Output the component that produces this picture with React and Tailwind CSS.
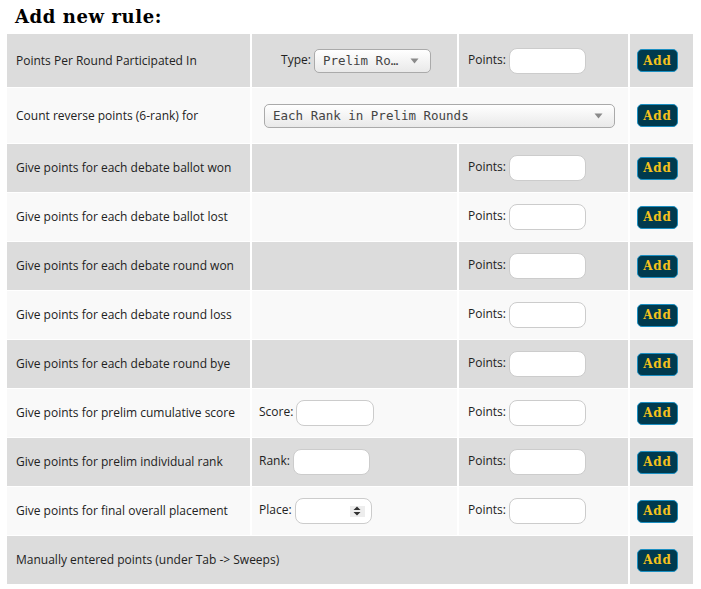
import React from 'react'

const body = { fontFamily: '"Open Sans", "Liberation Sans", sans-serif' }
const mono = { fontFamily: '"DejaVu Sans Mono", "Liberation Mono", monospace' }
const slab = { fontFamily: '"DejaVu Serif", "Liberation Serif", serif' }

function AddButton() {
  return (
    <button
      className="w-[41px] h-[23px] rounded-[5px] border border-[#1b8fc2] bg-[#003a4e] text-[#f6c21c] text-[12px] font-bold leading-none tracking-[0.8px]"
      style={slab}
    >
      Add
    </button>
  )
}

function TextBox({ w = 'w-[77px]' }) {
  return <input className={`${w} h-[26px] rounded-lg border border-[#cccccc] bg-white outline-none`} />
}

function Caret() {
  return (
    <svg width="9" height="6" viewBox="0 0 9 6" className="shrink-0">
      <path d="M0.5 0.5 L8.5 0.5 L4.5 5.5 Z" fill="#8a8a8a" />
    </svg>
  )
}

function FancySelect({ text, className }) {
  return (
    <div
      className={`${className} h-[24px] flex items-center justify-between pl-[8px] pr-[11px] rounded-[5px] border border-[#aaaaaa] bg-gradient-to-b from-white to-[#e9e9e9] text-[12.5px] text-[#444]`}
      style={mono}
    >
      <span className="whitespace-nowrap mt-[1px]">{text}</span>
      <Caret />
    </div>
  )
}

function PlaceSelect() {
  return (
    <div className="w-[77px] h-[26px] rounded-lg border border-[#cccccc] bg-white flex items-center justify-end pr-[6px]">
      <div className="w-[15px] h-[11px] bg-[#ededed] flex items-center justify-center">
        <svg width="8" height="10" viewBox="0 0 8 10">
          <path d="M4 0.5 L7.5 4 L0.5 4 Z M4 9.5 L7.5 6 L0.5 6 Z" fill="#333" />
        </svg>
      </div>
    </div>
  )
}

function Labeled({ label, children }) {
  return (
    <div className="flex items-center gap-[3px]">
      <span className="-mt-[2px]">{label}</span>
      {children}
    </div>
  )
}

const rows = [
  { label: 'Points Per Round Participated In', kind: 'type' },
  { label: 'Count reverse points (6-rank) for', kind: 'wide' },
  { label: 'Give points for each debate ballot won' },
  { label: 'Give points for each debate ballot lost' },
  { label: 'Give points for each debate round won' },
  { label: 'Give points for each debate round loss' },
  { label: 'Give points for each debate round bye' },
  { label: 'Give points for prelim cumulative score', kind: 'score' },
  { label: 'Give points for prelim individual rank', kind: 'rank' },
  { label: 'Give points for final overall placement', kind: 'place' },
  { label: 'Manually entered points (under Tab -> Sweeps)', kind: 'manual' },
]

export default function App() {
  return (
    <div className="min-h-[589px] bg-white pl-[7px] text-[12px] text-[#222]" style={body}>
      <h2 className="pl-[8px] pt-[4px] h-[34px] text-[18px] font-bold tracking-[0.6px] text-black leading-[26px]" style={slab}>
        Add new rule:
      </h2>

      <div className="w-[686px] grid grid-cols-[243px_205px_169px_63px] grid-rows-[53px_55px_repeat(9,48px)] gap-x-[2px] gap-y-px">
        {rows.map((r, i) => {
          const bg = i % 2 === 0 ? 'bg-[#dcdcdc]' : 'bg-[#f9f9f9]'
          return (
            <React.Fragment key={i}>
              {/* Description */}
              <div
                className={`${bg} flex items-center pl-[9px] ${r.kind === 'manual' ? 'col-span-3' : ''}`}
              >
                {r.label}
              </div>

              {/* Options */}
              {r.kind === 'wide' && (
                <div className={`${bg} col-span-2 flex items-center pl-[12px]`}>
                  <FancySelect text="Each Rank in Prelim Rounds" className="w-[351px]" />
                </div>
              )}
              {r.kind !== 'wide' && r.kind !== 'manual' && (
                <div className={`${bg} flex items-center ${r.kind === 'type' ? 'justify-center pl-[3px]' : 'pl-[7px]'}`}>
                  {r.kind === 'type' && (
                    <Labeled label="Type:">
                      <FancySelect text="Prelim Ro…" className="w-[117px]" />
                    </Labeled>
                  )}
                  {r.kind === 'score' && (
                    <Labeled label="Score:">
                      <TextBox w="w-[78px]" />
                    </Labeled>
                  )}
                  {r.kind === 'rank' && (
                    <Labeled label="Rank:">
                      <TextBox />
                    </Labeled>
                  )}
                  {r.kind === 'place' && (
                    <Labeled label="Place:">
                      <PlaceSelect />
                    </Labeled>
                  )}
                </div>
              )}
              {r.kind !== 'wide' && r.kind !== 'manual' && (
                <div className={`${bg} flex items-center pl-[9px]`}>
                  <Labeled label="Points:">
                    <TextBox />
                  </Labeled>
                </div>
              )}

              {/* Action */}
              <div className={`${bg} flex items-center pl-[7px]`}>
                <AddButton />
              </div>
            </React.Fragment>
          )
        })}
      </div>
    </div>
  )
}
